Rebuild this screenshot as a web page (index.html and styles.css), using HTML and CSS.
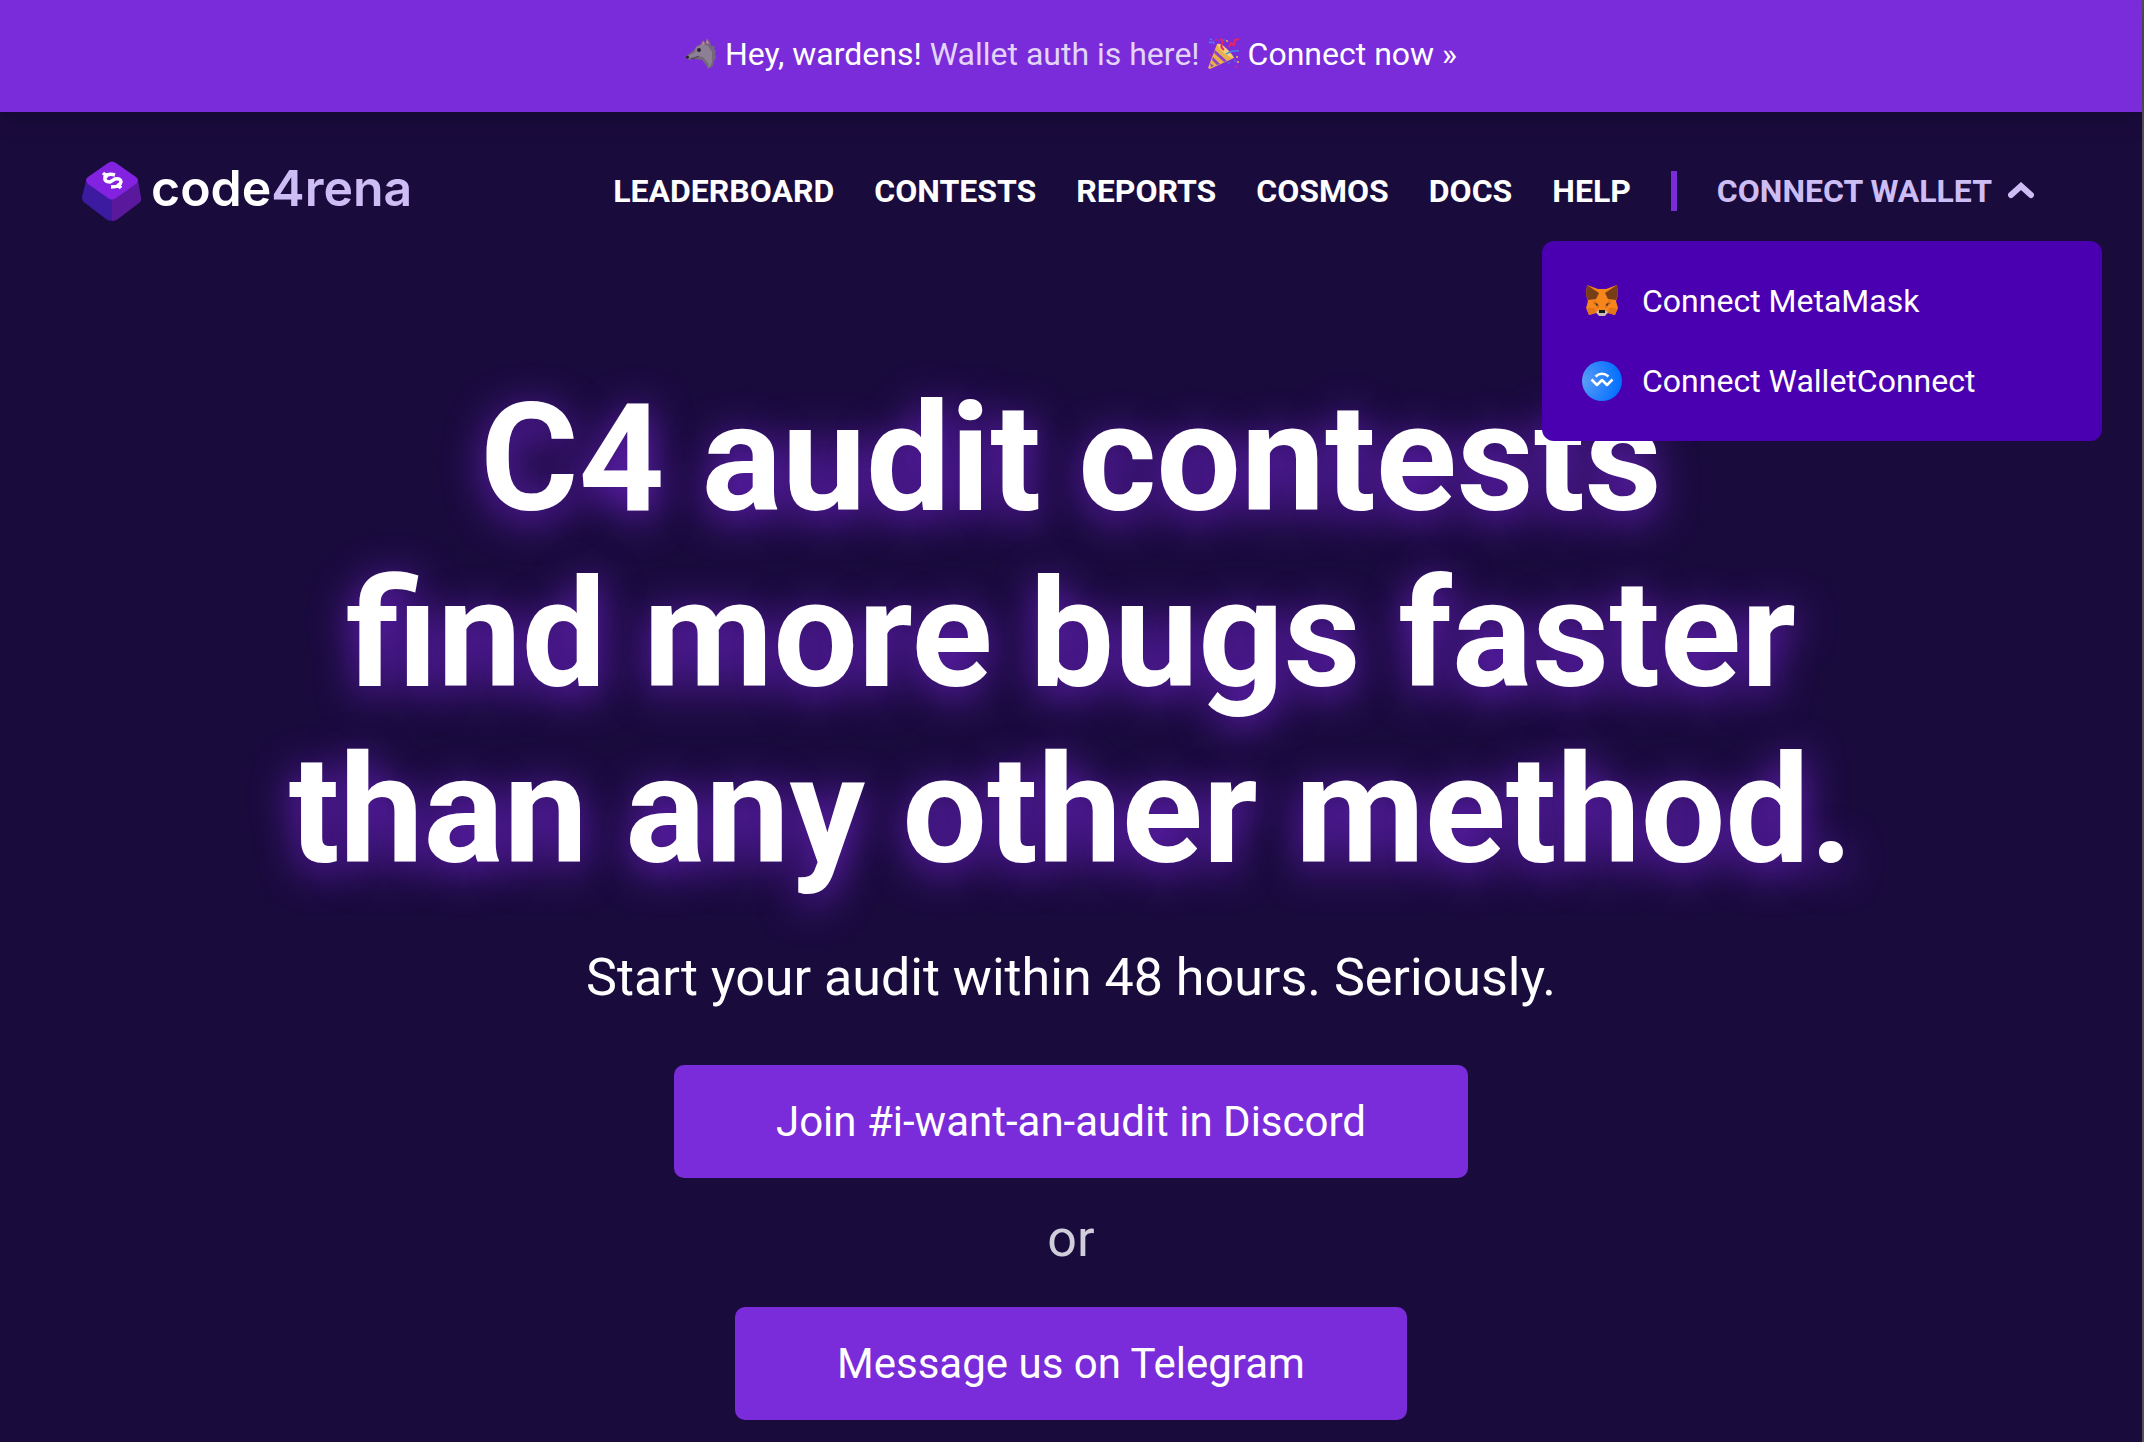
FILE: index.html
```html
<!DOCTYPE html>
<html lang="en">
<head>
<meta charset="utf-8">
<title>Code4rena</title>
<link rel="stylesheet" href="styles.css">
</head>
<body>
<div class="page">
  <aside class="banner">
    <svg class="emoji" viewBox="0 0 32 32" aria-hidden="true">
      <path d="M15 7 18 2 21 5 22 0 25 4 26 8 30 8 29 11 31 13 30 16 31 20 29 23 28 28 23 31 21 27 17 22 9 21 4 22 1 20 2 17 8 13 11 9Z" fill="#74677c"/>
      <path d="M17 6 11 9 10 14 3 18 5 20 12 18 18 19 23 25 24 30 27 24 27 14 23 8Z" fill="#8d7f94"/>
      <path d="m18 3 2 3-3 1ZM22 1l2 5-3-1Z" fill="#c58a9c"/>
      <ellipse cx="14" cy="12" rx="2" ry="2" fill="#2c2434"/>
      <path d="M1 18q3-1 3 1l-1 2-2-1Z" fill="#29222f"/>
      <path d="M6 21q5-1 8-3" fill="none" stroke="#4c4056" stroke-width="1"/>
    </svg>
    <span>Hey, wardens!</span>
    <span class="banner-soft">Wallet auth is here!</span>
    <svg class="emoji" viewBox="0 0 32 32" aria-hidden="true">
      <path d="M9 6 26 20 2 31 0 30Z" fill="#e9b14b"/>
      <path d="M9 6q4-1 10 5t7 9q-6-1-11-6T9 6Z" fill="#f3cf78"/>
      <path d="m7 12 12 11-3 1L6 15ZM5 19l7 7-3 1-5-5ZM2 25l4 3-3 1Z" fill="#9043c9"/>
      <path d="M12 1q4 2 2 5t2 6M21 9l2-4 3 2 1-5 4-1" fill="none" stroke="#e52567" stroke-width="2"/>
      <path d="M18 16q6-4 13-3M1 4l3 1M2 1l2 1M5 3l1 3" fill="none" stroke="#4385e8" stroke-width="1.5"/>
      <circle cx="19" cy="3" r="1" fill="#f3ba36"/><circle cx="29" cy="19" r="1" fill="#f3ba36"/><circle cx="30" cy="24" r="1" fill="#f3ba36"/>
      <circle cx="8" cy="2" r="1" fill="#e52567"/><circle cx="2" cy="17" r="1" fill="#e52567"/><circle cx="28" cy="29" r="1" fill="#e52567"/>
      <circle cx="21" cy="25" r="1" fill="#367ce0"/><circle cx="27" cy="23" r="1" fill="#367ce0"/><circle cx="16" cy="2" r="1" fill="#367ce0"/>
    </svg>
    <a class="banner-link" href="#connect">Connect now »</a>
  </aside>

  <header class="header">
    <a class="logo" href="#home">
      <svg class="logo-mark" viewBox="0 0 60 60" aria-hidden="true">
        <path d="M4 20 30 38V60Q27 60 24 58L3 42Q0 40 0 36Z" fill="#3d1ba0"/>
        <path d="M56 20 30 38V60Q33 60 36 58L57 42Q60 40 59 36Z" fill="#5a189c"/>
        <path d="M26 2Q30-1 34 2L54 16Q58 19 54 23L34 37Q30 40 26 37L6 23Q2 19 6 16Z" fill="#8322e0"/>
        <path d="M33 14Q26 12 23 16 22 21 28 21L33 18Q39 17 39 21 38 26 29 26M21 12l5 4M35 23l4 4" fill="none" stroke="#fff" stroke-width="3.500"/>
      </svg>
      <span class="logo-text">code<span class="logo-accent">4rena</span></span>
    </a>
    <nav class="nav">
      <a href="#leaderboard">LEADERBOARD</a>
      <a href="#contests">CONTESTS</a>
      <a href="#reports">REPORTS</a>
      <a href="#cosmos">COSMOS</a>
      <a href="#docs">DOCS</a>
      <a href="#help">HELP</a>
      <span class="divider"></span>
      <div class="wallet">
        <button class="wallet-toggle" type="button" aria-expanded="true">CONNECT WALLET
          <svg class="chevron" viewBox="0 0 26 18" aria-hidden="true"><path d="M3 13 13 4 23 13" fill="none" stroke="currentColor" stroke-width="6" stroke-linecap="round"/></svg>
        </button>
        <div class="wallet-menu">
          <button class="wallet-option" type="button">
            <svg class="wallet-icon" viewBox="0 0 40 40" aria-hidden="true">
              <path d="M5 4 16 8H24L35 4 36 14 34 20 36 27 33 34 26 32 22 35H18L14 32 7 34 4 27 6 20 4 14Z" fill="#f6851b"/>
              <path d="M5 4 17 12 14 18 6 19 4 14ZM35 4 23 12 26 18 34 19 36 14Z" fill="#763d16"/>
              <path d="m12 18 4 5-5 0ZM28 18l-4 5 5 0ZM5 27l8 0 1 5-7 2ZM35 27l-8 0-1 5 7 2Z" fill="#e2761b"/>
              <path d="M11 21 17 24 16 27ZM29 21 23 24 24 27Z" fill="#cd6116"/>
              <path d="m13 22 3 1-1 2ZM27 22l-3 1 1 2Z" fill="#233447"/>
              <path d="M14 31 17 29H23L26 31 23 35H17Z" fill="#c8bbb2"/>
              <path d="M17 29H23L23 32H17Z" fill="#161616"/>
            </svg>
            Connect MetaMask
          </button>
          <button class="wallet-option" type="button">
            <svg class="wallet-icon" viewBox="0 0 40 40" aria-hidden="true">
              <defs><radialGradient id="wc" cx="0" cy=".5" r="1"><stop offset="0" stop-color="#5d9df6"/><stop offset="1" stop-color="#006fff"/></radialGradient></defs>
              <circle cx="20" cy="20" r="20" fill="url(#wc)"/>
              <path d="M13.500 15.500Q20 10 26.500 15.500M9.500 18.500 15 24 20 19 25 24 30.500 18.500" fill="none" stroke="#fff" stroke-width="2.500" stroke-linejoin="round"/>
            </svg>
            Connect WalletConnect
          </button>
        </div>
      </div>
    </nav>
  </header>

  <main class="hero">
    <h1 class="hero-title">C4 audit contests<br>find more bugs faster<br>than any other method.</h1>
    <p class="hero-lead">Start your audit within 48 hours. Seriously.</p>
    <a class="cta" href="#discord">Join #i-want-an-audit in Discord</a>
    <p class="hero-or">or</p>
    <a class="cta" href="#telegram">Message us on Telegram</a>
  </main>
</div>
</body>
</html>
```
FILE: styles.css
```css
* {
  box-sizing: border-box;
}

body {
  margin: 0;
  background: #1a0b3d;
  color: #fff;
  font-family: Roboto, "Liberation Sans", sans-serif;
  font-size: 32px;
  line-height: 40px;
}

a {
  color: inherit;
  text-decoration: none;
}

button {
  border: 0;
  background: none;
  color: inherit;
  font: inherit;
  cursor: pointer;
}

.page {
  min-height: 100vh;
  border-right: 2px solid #535058;
}

.banner {
  display: flex;
  justify-content: center;
  align-items: center;
  gap: 8px;
  padding: 34px 40px 38px;
  background: #7a2cda;
  box-shadow: 0 4px 24px rgba(0, 0, 0, 0.25);
}

.emoji {
  width: 32px;
  height: 32px;
}

.banner-soft {
  color: #e4d4f8;
}

.header {
  display: flex;
  justify-content: space-between;
  align-items: center;
  padding: 49px 108px 0 82px;
}

.logo {
  display: flex;
  align-items: flex-start;
  gap: 9px;
}

.logo-mark {
  width: 60px;
  height: 60px;
}

.logo-text {
  font-family: Inter, "Liberation Sans", sans-serif;
  font-size: 50px;
  font-weight: 600;
  line-height: 54px;
}

.logo-accent {
  color: #cdbdf5;
}

.nav {
  display: flex;
  align-items: center;
  gap: 40px;
  font-weight: 700;
}

.divider {
  width: 6px;
  height: 40px;
  background: #7a2cda;
}

.wallet {
  position: relative;
}

.wallet-toggle {
  display: flex;
  align-items: center;
  gap: 16px;
  padding: 0;
  color: #cdbdf5;
}

.chevron {
  width: 26px;
  height: 18px;
}

.wallet-menu {
  position: absolute;
  top: 70px;
  right: -68px;
  z-index: 1;
  width: 560px;
  padding: 20px 0;
  border-radius: 12px;
  background: #4a00b0;
  font-weight: 400;
}

.wallet-option {
  display: flex;
  align-items: center;
  gap: 20px;
  width: 100%;
  padding: 20px 40px;
}

.wallet-icon {
  width: 40px;
  height: 40px;
}

.hero {
  display: flex;
  flex-direction: column;
  align-items: center;
  padding: 150px 40px 20px;
  text-align: center;
}

.hero-title {
  margin: 0 0 49px;
  font-size: 150px;
  font-weight: 700;
  line-height: 176px;
  text-shadow: 0 8px 40px #7024cc;
}

.hero-lead,
.hero-or {
  margin: 0;
  font-size: 52px;
  line-height: 60px;
}

.hero-or {
  margin: 31px 0 38px;
  color: #d1cedb;
}

.cta {
  padding: 32px 102px;
  border-radius: 10px;
  background: #7a2cda;
  font-size: 42px;
  line-height: 49px;
}

.hero-lead + .cta {
  margin-top: 57px;
}
```
